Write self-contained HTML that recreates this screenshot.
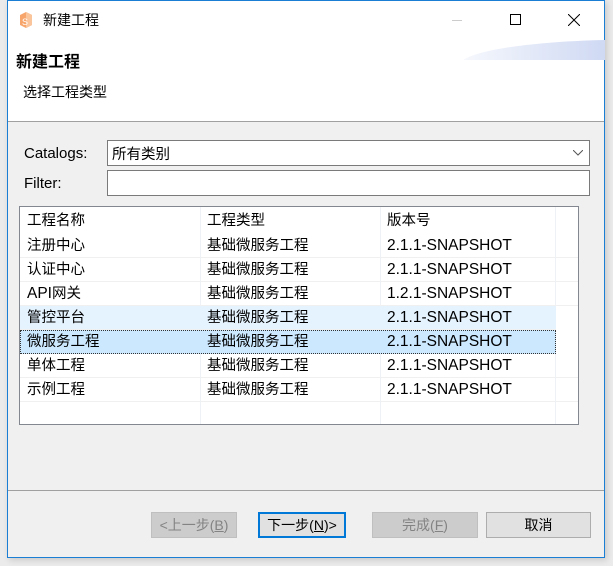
<!DOCTYPE html>
<html><head><meta charset="utf-8"><style>
*{margin:0;padding:0;box-sizing:border-box}
body{width:613px;height:566px;background:#ebebeb;position:relative;overflow:hidden;font-family:"Liberation Sans","Noto Sans CJK SC",sans-serif;font-size:14px;color:#000}
.win{position:absolute;left:7px;top:0;width:598px;height:558px;border:1px solid #1a7fd4;background:#f0f0f0;box-shadow:2px 2px 6px rgba(0,0,0,.15)}
.hdr{position:absolute;left:0;top:0;width:596px;height:121px;background:#fff;border-bottom:1px solid #a0a0a0}
.a{position:absolute;white-space:nowrap}
.box{position:absolute;background:#fff;border:1px solid #7a7a7a}
.tbl{position:absolute;left:11px;top:205px;width:560px;height:219px;border:1px solid #828790;background:#fff;overflow:hidden}
.row{position:absolute;left:0;width:558px;height:24px;border-bottom:1px solid #f0f0f0}
.c{position:absolute;top:2px;font-size:14.5px;line-height:20px}
.c.l{font-size:15.5px}
.vl{position:absolute;top:0;width:1px;height:217px;background:#eef1f6}
.btn{position:absolute;top:511px;height:26px;border:1px solid #adadad;background:#e1e1e1;text-align:center;line-height:24px;font-size:14px}
.dis{background:#cccccc;border-color:#bfbfbf;color:#838383}
</style></head><body>
<div class="win">
<div class="hdr">
 <svg class="a" style="left:9px;top:10px" width="16" height="18"><path d="M3 4 L9 1 L15 4 L15 14 L9 17 L3 14Z" fill="#f7a56a"/><path d="M9 1 L15 4 L15 14 L9 17Z" fill="#fbc59b"/><text x="5" y="14" font-size="9" fill="#fff" font-family="Liberation Sans">S</text></svg>
 <div class="a" style="left:35px;top:9px;font-size:14px">新建工程</div>
 <div class="a" style="left:444px;top:19px;width:10px;height:1px;background:#ccc"></div>
 <div class="a" style="left:502px;top:13px;width:11px;height:11px;border:1px solid #000"></div>
 <svg class="a" style="left:560px;top:13px" width="12" height="12"><path d="M0 0L12 12M12 0L0 12" stroke="#000" stroke-width="1"/></svg>
 <svg class="a" style="left:455px;top:38px" width="142" height="21"><defs><linearGradient id="g" x1="0" x2="1"><stop offset="0" stop-color="#f6f8fd"/><stop offset="1" stop-color="#cfd9f3"/></linearGradient></defs><path d="M0 21 C20 8 90 2 142 1 L142 21Z" fill="url(#g)"/></svg>
 <div class="a" style="left:8px;top:47px;font-size:16px;font-weight:bold">新建工程</div>
 <div class="a" style="left:15px;top:81px;font-size:14px">选择工程类型</div>
</div>
<div class="a" style="left:16px;top:143px;font-size:15px;line-height:20px">Catalogs:</div>
<div class="box" style="left:99px;top:139px;width:483px;height:26px"><span class="a" style="left:4px;top:2px;font-size:14.5px">所有类别</span>
<svg class="a" style="left:465px;top:9px" width="10" height="6"><path d="M0 0L5 5L10 0" stroke="#555" fill="none"/></svg></div>
<div class="a" style="left:16px;top:173px;font-size:15px;line-height:20px">Filter:</div>
<div class="box" style="left:99px;top:169px;width:483px;height:26px"></div>
<div class="tbl">
 <div class="vl" style="left:180px"></div><div class="vl" style="left:360px"></div><div class="vl" style="left:535px"></div>
 <div class="row" style="top:0;height:27px;border-bottom:none"><span class="c" style="left:7px;top:4px">工程名称</span><span class="c" style="left:187px;top:4px">工程类型</span><span class="c" style="left:367px;top:4px">版本号</span></div>
 <div class="row" style="top:27px"><span class="c" style="left:7px">注册中心</span><span class="c" style="left:187px">基础微服务工程</span><span class="c l" style="left:367px">2.1.1-SNAPSHOT</span></div>
 <div class="row" style="top:51px"><span class="c" style="left:7px">认证中心</span><span class="c" style="left:187px">基础微服务工程</span><span class="c l" style="left:367px">2.1.1-SNAPSHOT</span></div>
 <div class="row" style="top:75px"><span class="c" style="left:7px"><span style="font-size:15.5px">API</span>网关</span><span class="c" style="left:187px">基础微服务工程</span><span class="c l" style="left:367px">1.2.1-SNAPSHOT</span></div>
 <div class="row" style="top:99px;background:#e5f3ff;width:536px"><span class="c" style="left:7px">管控平台</span><span class="c" style="left:187px">基础微服务工程</span><span class="c l" style="left:367px">2.1.1-SNAPSHOT</span></div>
 <div class="row" style="top:123px;background:#cce8ff;width:536px;border:1px dotted #333"><span class="c" style="left:6px;top:1px">微服务工程</span><span class="c" style="left:186px;top:1px">基础微服务工程</span><span class="c l" style="left:366px;top:1px">2.1.1-SNAPSHOT</span></div>
 <div class="row" style="top:147px"><span class="c" style="left:7px">单体工程</span><span class="c" style="left:187px">基础微服务工程</span><span class="c l" style="left:367px">2.1.1-SNAPSHOT</span></div>
 <div class="row" style="top:171px"><span class="c" style="left:7px">示例工程</span><span class="c" style="left:187px">基础微服务工程</span><span class="c l" style="left:367px">2.1.1-SNAPSHOT</span></div>
</div>
<div class="a" style="left:0;top:489px;width:596px;height:1px;background:#a0a0a0"></div>
<div class="btn dis" style="left:143px;width:86px">&lt;上一步(<u>B</u>)</div>
<div class="btn" style="left:250px;width:88px;border:2px solid #0078d7;line-height:22px">下一步(<u>N</u>)&gt;</div>
<div class="btn dis" style="left:364px;width:106px">完成(<u>F</u>)</div>
<div class="btn" style="left:478px;width:105px">取消</div>
</div>
</body></html>
